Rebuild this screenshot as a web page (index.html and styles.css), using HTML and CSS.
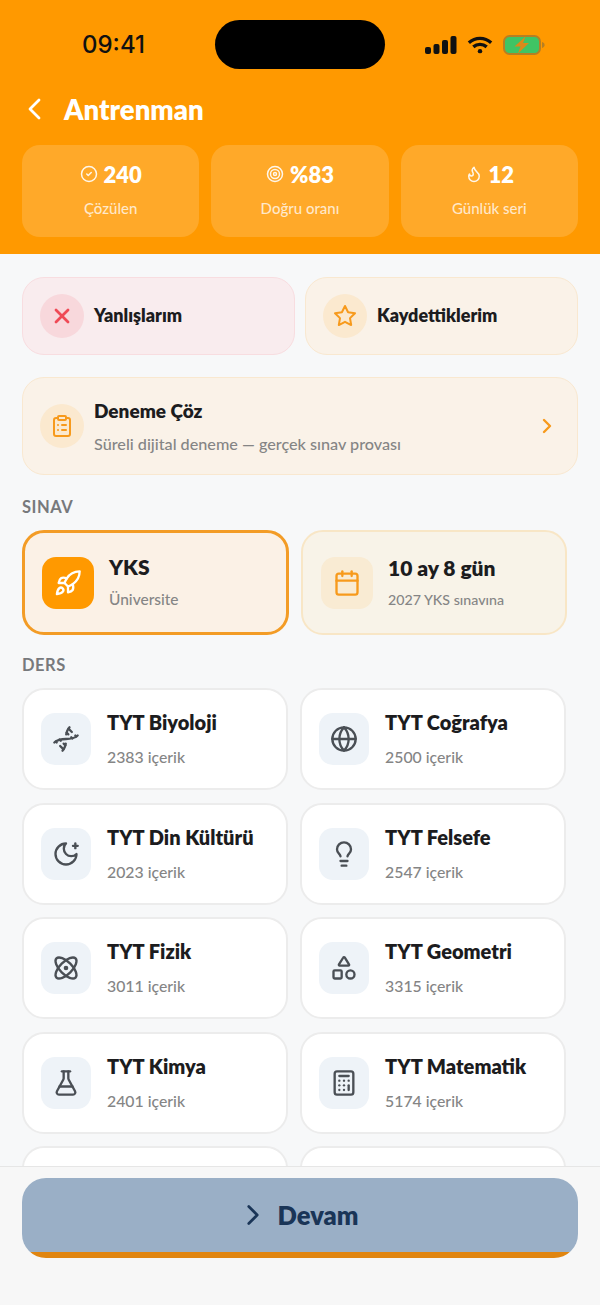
FILE: index.html
```html
<!DOCTYPE html>
<html lang="tr">
<head>
    <meta charset="UTF-8">
    <meta name="viewport" content="width=device-width, initial-scale=1.0">
    <title>Antrenman</title>
    <link rel="stylesheet" href="styles.css">
</head>
<body>
    <div class="screen">
        <header class="top">
            <div class="status">
                <span class="clock">09:41</span>
                <div class="island"></div>
                <div class="status-icons">
                    <svg width="32" height="18" viewBox="0 0 32 18" fill="#111"><rect x="0" y="11" width="6" height="7" rx="2"/><rect x="8.5" y="8" width="6" height="10" rx="2"/><rect x="17" y="4" width="6" height="14" rx="2"/><rect x="25.5" y="0" width="6" height="18" rx="2"/></svg>
                    <svg width="26" height="20" viewBox="0 0 28 20" fill="none" stroke="#111" stroke-width="3.6"><path d="M2 7.5c7-6.2 17-6.2 24 0"/><path d="M6.8 12c4.2-3.6 10.2-3.6 14.400 0"/><circle cx="14" cy="16.6" r="2.4" fill="#111" stroke="none"/></svg>
                    <svg width="42" height="20" viewBox="0 0 42 20"><rect x="1" y="1" width="36" height="18" rx="5.5" fill="#3fc464" stroke="#b57f24" stroke-width="2"/><path d="M39 7v6c1.6-.4 2.6-1.6 2.600-3S40.600 7.400 39 7z" fill="#b57f24"/><path d="M22.500 1.500 11.500 11.500h6l-2.500 7 11-10.500h-6z" fill="#d98a1a"/></svg>
                </div>
            </div>
            <div class="title-row">
                <svg class="back" width="13" height="22" viewBox="0 0 13 22" fill="none" stroke="#fff" stroke-width="2.8" stroke-linecap="round" stroke-linejoin="round"><path d="M11 2 2 11l9 9"/></svg>
                <h1>Antrenman</h1>
            </div>
            <div class="stats">
                <div class="stat">
                    <div class="stat-value">
                        <svg class="ic-18" viewBox="0 0 24 24"><circle cx="12" cy="12" r="10"/><path d="m9 12 2 2 4-4"/></svg>
                        240
                    </div>
                    <div class="stat-label">Çözülen</div>
                </div>
                <div class="stat">
                    <div class="stat-value">
                        <svg class="ic-18" viewBox="0 0 24 24"><circle cx="12" cy="12" r="10"/><circle cx="12" cy="12" r="6"/><circle cx="12" cy="12" r="2"/></svg>
                        %83
                    </div>
                    <div class="stat-label">Doğru oranı</div>
                </div>
                <div class="stat">
                    <div class="stat-value">
                        <svg class="ic-18" viewBox="0 0 24 24"><path d="M8.500 14.500A2.500 2.500 0 0 0 11 12c0-1.380-.5-2-1-3-1.072-2.143-.224-4.054 2-6 .5 2.500 2 4.900 4 6.500 2 1.600 3 3.500 3 5.500a7 7 0 1 1-14 0c0-1.153.433-2.294 1-3a2.500 2.500 0 0 0 2.500 2.500z"/></svg>
                        12
                    </div>
                    <div class="stat-label">Günlük seri</div>
                </div>
            </div>
        </header>

        <main class="content">
            <div class="quick-row">
                <div class="quick quick-red">
                    <div class="round round-red">
                        <svg class="ic-24 red" viewBox="0 0 24 24"><path d="M18 6 6 18"/><path d="m6 6 12 12"/></svg>
                    </div>
                    <span class="quick-name">Yanlışlarım</span>
                </div>
                <div class="quick quick-orange">
                    <div class="round round-orange">
                        <svg class="ic-24 orange" viewBox="0 0 24 24"><polygon points="12 2 15.090 8.260 22 9.270 17 14.140 18.180 21.020 12 17.770 5.820 21.020 7 14.140 2 9.270 8.910 8.260 12 2"/></svg>
                    </div>
                    <span class="quick-name">Kaydettiklerim</span>
                </div>
            </div>

            <div class="quick quick-orange mock">
                <div class="round round-orange">
                    <svg class="ic-24 orange" viewBox="0 0 24 24"><rect x="8" y="2" width="8" height="4" rx="1"/><path d="M16 4h2a2 2 0 0 1 2 2v14a2 2 0 0 1-2 2H6a2 2 0 0 1-2-2V6a2 2 0 0 1 2-2h2"/><path d="M12 11h4"/><path d="M12 16h4"/><path d="M8 11h.01"/><path d="M8 16h.01"/></svg>
                </div>
                <div class="mock-text">
                    <span class="mock-name">Deneme Çöz</span>
                    <span class="mock-sub">Süreli dijital deneme — gerçek sınav provası</span>
                </div>
                <svg class="ic-22 orange mock-arrow" viewBox="0 0 24 24"><path d="m9 18 6-6-6-6"/></svg>
            </div>

            <div class="section-label">SINAV</div>
            <div class="grid exams">
                <div class="card card-exam active">
                    <div class="tile tile-exam tile-solid">
                        <svg class="ic-28 white" viewBox="0 0 24 24"><path d="M4.500 16.500c-1.500 1.260-2 5-2 5s3.740-.5 5-2c.71-.84.7-2.130-.09-2.910a2.180 2.180 0 0 0-2.910-.09z"/><path d="m12 15-3-3a22 22 0 0 1 2-3.950A12.880 12.880 0 0 1 22 2c0 2.720-.78 7.500-6 11a22.350 22.350 0 0 1-4 2z"/><path d="M9 12H4s.55-3.030 2-4c1.620-1.080 5 0 5 0"/><path d="M12 15v5s3.030-.55 4-2c1.080-1.620 0-5 0-5"/></svg>
                    </div>
                    <div class="card-text">
                        <span class="card-name">YKS</span>
                        <span class="card-sub">Üniversite</span>
                    </div>
                </div>
                <div class="card card-exam">
                    <div class="tile tile-exam tile-cream">
                        <svg class="ic-28 orange" viewBox="0 0 24 24"><rect x="3" y="4" width="18" height="18" rx="2"/><path d="M16 2v4"/><path d="M8 2v4"/><path d="M3 10h18"/></svg>
                    </div>
                    <div class="card-text">
                        <span class="card-name">10 ay 8 gün</span>
                        <span class="card-sub small">2027 YKS sınavına</span>
                    </div>
                </div>
            </div>

            <div class="section-label second">DERS</div>
            <div class="grid courses">
                <div class="card">
                    <div class="tile">
                        <svg class="ic-28" viewBox="0 0 24 24"><path d="m10 16 1.500 1.500"/><path d="m14 8-1.500-1.500"/><path d="M15 2c-1.798 1.998-2.518 3.995-2.807 5.993"/><path d="m16.500 10.500 1 1"/><path d="m17 6-2.891-2.891"/><path d="M2 15c6.667-6 13.333 0 20-6"/><path d="m20 9 .891.891"/><path d="M3.109 14.109 4 15"/><path d="m6.500 12.500 1 1"/><path d="m7 18 2.891 2.891"/><path d="M9 22c1.798-1.998 2.518-3.995 2.807-5.993"/></svg>
                    </div>
                    <div class="card-text">
                        <span class="card-name">TYT Biyoloji</span>
                        <span class="card-sub">2383 içerik</span>
                    </div>
                </div>
                <div class="card">
                    <div class="tile">
                        <svg class="ic-28" viewBox="0 0 24 24"><circle cx="12" cy="12" r="10"/><path d="M12 2a14.500 14.500 0 0 0 0 20 14.500 14.500 0 0 0 0-20"/><path d="M2 12h20"/></svg>
                    </div>
                    <div class="card-text">
                        <span class="card-name">TYT Coğrafya</span>
                        <span class="card-sub">2500 içerik</span>
                    </div>
                </div>
                <div class="card">
                    <div class="tile">
                        <svg class="ic-28" viewBox="0 0 24 24"><path d="M12 3a6 6 0 0 0 9 9 9 9 0 1 1-9-9Z"/><path d="M20 3v4"/><path d="M22 5h-4"/></svg>
                    </div>
                    <div class="card-text">
                        <span class="card-name">TYT Din Kültürü</span>
                        <span class="card-sub">2023 içerik</span>
                    </div>
                </div>
                <div class="card">
                    <div class="tile">
                        <svg class="ic-28" viewBox="0 0 24 24"><path d="M15 14c.2-1 .7-1.700 1.500-2.500 1-.9 1.500-2.200 1.500-3.500A6 6 0 0 0 6 8c0 1 .2 2.200 1.500 3.500.7.7 1.300 1.500 1.500 2.500"/><path d="M9 18h6"/><path d="M10 22h4"/></svg>
                    </div>
                    <div class="card-text">
                        <span class="card-name">TYT Felsefe</span>
                        <span class="card-sub">2547 içerik</span>
                    </div>
                </div>
                <div class="card">
                    <div class="tile">
                        <svg class="ic-28" viewBox="0 0 24 24"><circle cx="12" cy="12" r="1"/><path d="M20.200 20.200c2.040-2.030.02-7.360-4.500-11.900-4.540-4.520-9.870-6.540-11.900-4.500-2.040 2.030-.02 7.360 4.500 11.900 4.540 4.520 9.870 6.540 11.900 4.500Z"/><path d="M15.700 15.700c4.520-4.540 6.540-9.870 4.500-11.900-2.030-2.040-7.360-.02-11.900 4.500-4.520 4.540-6.540 9.870-4.500 11.900 2.030 2.040 7.360.02 11.900-4.500Z"/></svg>
                    </div>
                    <div class="card-text">
                        <span class="card-name">TYT Fizik</span>
                        <span class="card-sub">3011 içerik</span>
                    </div>
                </div>
                <div class="card">
                    <div class="tile">
                        <svg class="ic-28" viewBox="0 0 24 24"><path d="M8.300 10a.7.7 0 0 1-.626-1.079L11.400 3a.7.7 0 0 1 1.198-.043L16.300 8.900a.7.7 0 0 1-.572 1.100Z"/><rect x="3" y="14" width="7" height="7" rx="1"/><circle cx="17.500" cy="17.500" r="3.500"/></svg>
                    </div>
                    <div class="card-text">
                        <span class="card-name">TYT Geometri</span>
                        <span class="card-sub">3315 içerik</span>
                    </div>
                </div>
                <div class="card">
                    <div class="tile">
                        <svg class="ic-28" viewBox="0 0 24 24"><path d="M14 2v6a2 2 0 0 0 .245.96l5.510 10.080A2 2 0 0 1 18 22H6a2 2 0 0 1-1.755-2.960l5.510-10.080A2 2 0 0 0 10 8V2"/><path d="M6.453 15h11.094"/><path d="M8.500 2h7"/></svg>
                    </div>
                    <div class="card-text">
                        <span class="card-name">TYT Kimya</span>
                        <span class="card-sub">2401 içerik</span>
                    </div>
                </div>
                <div class="card">
                    <div class="tile">
                        <svg class="ic-28" viewBox="0 0 24 24"><rect x="4" y="2" width="16" height="20" rx="2"/><path d="M8 6h8"/><path d="M16 14v4"/><path d="M16 10h.01"/><path d="M12 10h.01"/><path d="M8 10h.01"/><path d="M12 14h.01"/><path d="M8 14h.01"/><path d="M12 18h.01"/><path d="M8 18h.01"/></svg>
                    </div>
                    <div class="card-text">
                        <span class="card-name">TYT Matematik</span>
                        <span class="card-sub">5174 içerik</span>
                    </div>
                </div>
                <div class="card"></div>
                <div class="card"></div>
            </div>
        </main>

        <footer class="bottom">
            <div class="go">
                <svg class="go-arrow" viewBox="0 0 24 24"><path d="m9 18 6-6-6-6"/></svg>
                <span>Devam</span>
            </div>
        </footer>
    </div>
</body>
</html>
```

FILE: styles.css
```css
* {
    box-sizing: border-box;
}
body {
    margin: 0;
    font-family: 'Lato', 'Noto Sans', sans-serif;
    background-color: #f7f8f9;
    color: #1c1c1e;
}
.screen {
    width: 600px;
    height: 1305px;
    display: flex;
    flex-direction: column;
    overflow: hidden;
}
svg {
    flex-shrink: 0;
    display: block;
}
.ic-18, .ic-22, .ic-24, .ic-28, .go-arrow {
    fill: none;
    stroke: #4a4f55;
    stroke-width: 2;
    stroke-linecap: round;
    stroke-linejoin: round;
}
.ic-18 {
    width: 18px;
    height: 18px;
    stroke: rgba(255, 255, 255, 0.9);
}
.ic-22 {
    width: 24px;
    height: 24px;
    stroke-width: 2.4;
}
.ic-24 {
    width: 24px;
    height: 24px;
}
.ic-28 {
    width: 28px;
    height: 28px;
}
.red {
    stroke: #ef4a56;
    stroke-width: 2.8;
}
.orange {
    stroke: #f79a1c;
}
.white {
    stroke: #fff;
}

/* header */
.top {
    height: 254px;
    flex-shrink: 0;
    background: #ff9900;
    padding-top: 20px;
}
.status {
    height: 49px;
    display: flex;
    align-items: center;
    padding-left: 82px;
}
.clock {
    width: 133px;
    font-family: 'Inter', sans-serif;
    font-size: 24px;
    font-weight: 500;
    color: #111;
}
.island {
    width: 170px;
    height: 49px;
    border-radius: 25px;
    background: #000;
}
.status-icons {
    display: flex;
    align-items: center;
    gap: 10px;
    margin-left: 40px;
}
.title-row {
    display: flex;
    align-items: center;
    gap: 23px;
    margin-top: 22px;
    padding-left: 28px;
    height: 36px;
}
h1 {
    margin: 0;
    font-size: 27.5px;
    font-weight: 800;
    color: #fff;
}
.stats {
    display: flex;
    gap: 12px;
    margin-top: 18px;
    padding: 0 22px;
}
.stat {
    flex: 1;
    height: 92px;
    border-radius: 18px;
    background: rgba(255, 255, 255, 0.16);
    display: flex;
    flex-direction: column;
    align-items: center;
    padding-top: 16px;
}
.stat-value {
    display: flex;
    align-items: center;
    gap: 6px;
    height: 26px;
    font-size: 22px;
    font-weight: 800;
    color: #fff;
}
.stat-label {
    margin-top: 12px;
    font-size: 15px;
    font-weight: 500;
    color: rgba(255, 255, 255, 0.75);
}

/* main */
.content {
    flex: 1;
    overflow: hidden;
    padding: 23px 22px 0;
}
.quick-row {
    display: flex;
    gap: 10px;
}
.quick {
    flex: 1;
    height: 78px;
    display: flex;
    align-items: center;
    gap: 10px;
    padding-left: 17px;
    border-radius: 22px;
    border-width: 1.5px;
    border-style: solid;
}
.quick-red {
    background: #f9ecee;
    border-color: #f8dde0;
}
.quick-orange {
    background: #faf2e8;
    border-color: #f9e8d0;
}
.round {
    width: 44px;
    height: 44px;
    border-radius: 50%;
    display: flex;
    align-items: center;
    justify-content: center;
    flex-shrink: 0;
}
.round-red {
    background: #f8d8dc;
}
.round-orange {
    background: #fbe9cf;
}
.quick-name {
    font-size: 18px;
    font-weight: 800;
    padding-bottom: 2px;
}
.mock {
    height: 98px;
    margin-top: 22px;
}
.mock-text {
    flex: 1;
    display: flex;
    flex-direction: column;
    gap: 12px;
}
.mock-name {
    font-size: 19px;
    font-weight: 800;
}
.mock-sub {
    font-size: 16.2px;
    font-weight: 500;
    color: #858585;
}
.mock-arrow {
    margin-right: 18px;
}
.section-label {
    margin-top: 22px;
    height: 20px;
    line-height: 20px;
    font-size: 16.5px;
    font-weight: 700;
    letter-spacing: 0.5px;
    color: #77797c;
}
.section-label.second {
    margin-top: 20px;
}
.grid {
    display: grid;
    width: 545px;
}
.exams {
    grid-template-columns: 267px 266px;
    gap: 12px;
    margin-top: 13px;
}
.courses {
    grid-template-columns: 265.5px 265.5px;
    gap: 12.6px;
    margin-top: 13px;
}
.card {
    height: 102px;
    display: flex;
    align-items: center;
    gap: 16px;
    padding-left: 17px;
    background: #fff;
    border: 2px solid #ececec;
    border-radius: 22px;
}
.card-exam {
    height: 105px;
    padding-left: 18px;
    background: #f8f3e8;
    border-color: #f8e6c6;
    gap: 15px;
}
.card-exam.active {
    padding-left: 17px;
    background: #fbf1e6;
    border: 3px solid #f39c26;
}
.tile {
    width: 50px;
    height: 52px;
    border-radius: 14px;
    background: #eef3f8;
    display: flex;
    align-items: center;
    justify-content: center;
    flex-shrink: 0;
}
.tile-exam {
    width: 52px;
}
.tile-solid {
    background: #ff9900;
}
.tile-cream {
    background: #f9ebd3;
}
.card-text {
    display: flex;
    flex-direction: column;
    gap: 13px;
    padding-bottom: 2px;
}
.card-name {
    font-size: 20px;
    font-weight: 800;
    white-space: nowrap;
}
.card-sub {
    font-size: 15.8px;
    font-weight: 500;
    color: #858585;
}
.card-exam .card-text {
    gap: 11px;
    padding-bottom: 3px;
}
.card-exam .card-name {
    font-size: 21px;
}
.card-exam .card-sub {
    font-size: 15.5px;
}
.card-exam .card-sub.small {
    font-size: 14.2px;
}

/* footer */
.bottom {
    height: 139px;
    flex-shrink: 0;
    padding: 11px 22px 0;
    background: #f7f7f7;
    border-top: 1px solid #e6e6e6;
}
.go {
    height: 80px;
    border-radius: 24px;
    background: linear-gradient(#9aafc6 calc(100% - 6px), #e08510 0);
    padding: 0 6px 7px 0;
    display: flex;
    align-items: center;
    justify-content: center;
    gap: 8px;
    font-size: 25.5px;
    font-weight: 800;
    color: #1a3557;
}
.go-arrow {
    width: 34px;
    height: 34px;
    stroke: #1a3557;
    stroke-width: 1.9;
}
```
